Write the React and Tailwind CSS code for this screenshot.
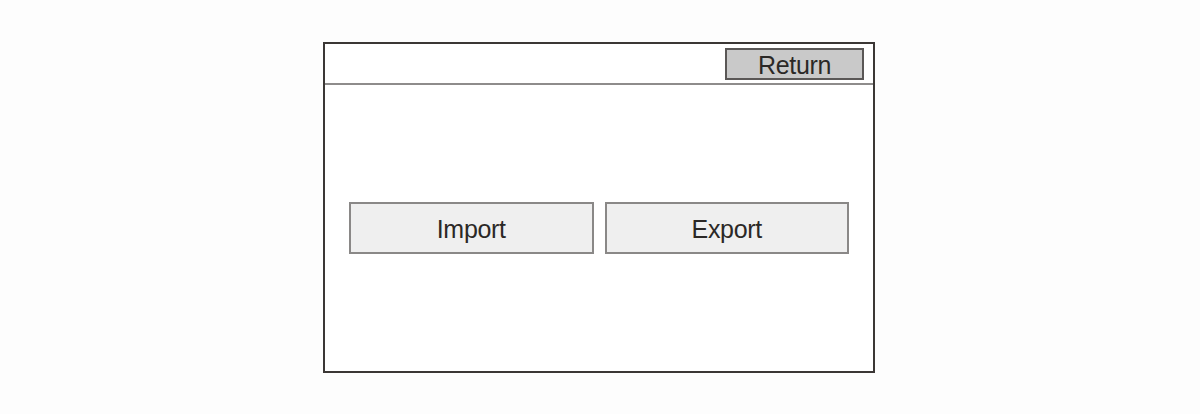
import React from 'react';

const App = () => {
  return (
    <div className="w-[1200px] h-[414px] bg-[#fdfdfd] flex justify-center pt-[42px] font-['Liberation_Sans',Arial,sans-serif] text-[#2b2826]">
      <div className="w-[552px] mr-[2px] h-[331px] border-2 border-[#3b3735] flex flex-col bg-white">
        {/* Top bar */}
        <div className="h-[41px] border-b-2 border-[#8e8c8b] flex justify-end items-start pt-[4px] pr-[9px]">
          <button className="w-[139px] h-[32px] bg-[#c9c9c9] border-2 border-[#5a5756] flex items-center justify-center pt-[3px] text-[25px] leading-none tracking-[-0.3px]">
            Return
          </button>
        </div>

        {/* Actions */}
        <div className="flex-1 flex items-center gap-[11px] px-[24px]">
          <button className="flex-1 h-[52px] bg-[#efefef] border-2 border-[#8a8887] flex items-center justify-center pt-[3px] text-[25px] leading-none tracking-[-0.3px]">
            Import
          </button>
          <button className="flex-1 h-[52px] bg-[#efefef] border-2 border-[#8a8887] flex items-center justify-center pt-[3px] text-[25px] leading-none tracking-[-0.3px]">
            Export
          </button>
        </div>
      </div>
    </div>
  );
};

export default App;
